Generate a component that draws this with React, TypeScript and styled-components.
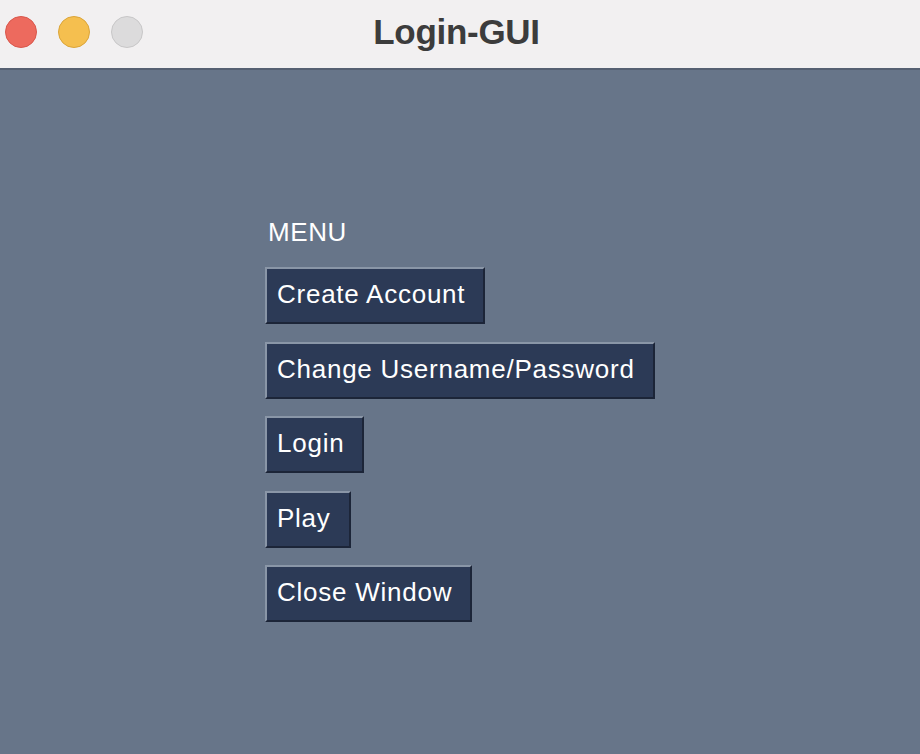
import styled, { createGlobalStyle } from 'styled-components';

const GlobalStyle = createGlobalStyle`
  html, body {
    margin: 0;
    padding: 0;
    background: #677589;
  }
  body {
    font-family: "Liberation Sans", Arial, sans-serif;
  }
`;

const Window = styled.div`
  width: 920px;
  height: 754px;
  display: flex;
  flex-direction: column;
  background: #677589;
  overflow: hidden;
`;

const TitleBar = styled.div`
  height: 68px;
  flex-shrink: 0;
  display: flex;
  align-items: center;
  background: #f2f0f1;
  border-bottom: 2px solid #566072;
`;

const Lights = styled.div`
  display: flex;
  align-items: center;
  column-gap: 21px;
  padding-left: 5px;
  margin-top: -4px;
`;

const Light = styled.span<{ $color: string; $ring: string }>`
  width: 32px;
  height: 32px;
  border-radius: 50%;
  box-sizing: border-box;
  background: ${({ $color }) => $color};
  border: 1px solid ${({ $ring }) => $ring};
`;

const Title = styled.div`
  flex: 1;
  text-align: center;
  margin-left: -150px;
  margin-top: -4px;
  font-size: 35px;
  font-weight: 700;
  color: #3c3c3c;
  letter-spacing: -0.3px;
`;

const Content = styled.div`
  display: flex;
  flex-direction: column;
  align-items: flex-start;
  padding: 147px 0 0 265px;
`;

const MenuLabel = styled.div`
  font-size: 26px;
  line-height: 30px;
  letter-spacing: 0.6px;
  color: #ffffff;
  margin-left: 3px;
  margin-bottom: 20px;
`;

const ButtonList = styled.div`
  display: flex;
  flex-direction: column;
  align-items: flex-start;
  row-gap: 17.5px;
`;

const MenuButton = styled.button`
  font-family: "Liberation Sans", Arial, sans-serif;
  font-size: 26px;
  line-height: 30px;
  letter-spacing: 0.75px;
  color: #ffffff;
  background: #2c3a56;
  padding: 10px 18px 13px 10px;
  margin: 0;
  border-style: solid;
  border-width: 2px;
  border-color: #8a96a7 #1c2538 #1c2538 #8a96a7;
  text-align: left;
  cursor: pointer;
`;

const items = ['Create Account', 'Change Username/Password', 'Login', 'Play', 'Close Window'];

export default function App() {
  return (
    <>
      <GlobalStyle />
      <Window>
        <TitleBar>
          <Lights>
            <Light $color="#ed6a5e" $ring="#d9574c" />
            <Light $color="#f5bf4f" $ring="#dba53a" />
            <Light $color="#dcdbdc" $ring="#c8c7c8" />
          </Lights>
          <Title>Login-GUI</Title>
        </TitleBar>
        <Content>
          <MenuLabel>MENU</MenuLabel>
          <ButtonList>
            {items.map((label) => (
              <MenuButton key={label}>{label}</MenuButton>
            ))}
          </ButtonList>
        </Content>
      </Window>
    </>
  );
}
